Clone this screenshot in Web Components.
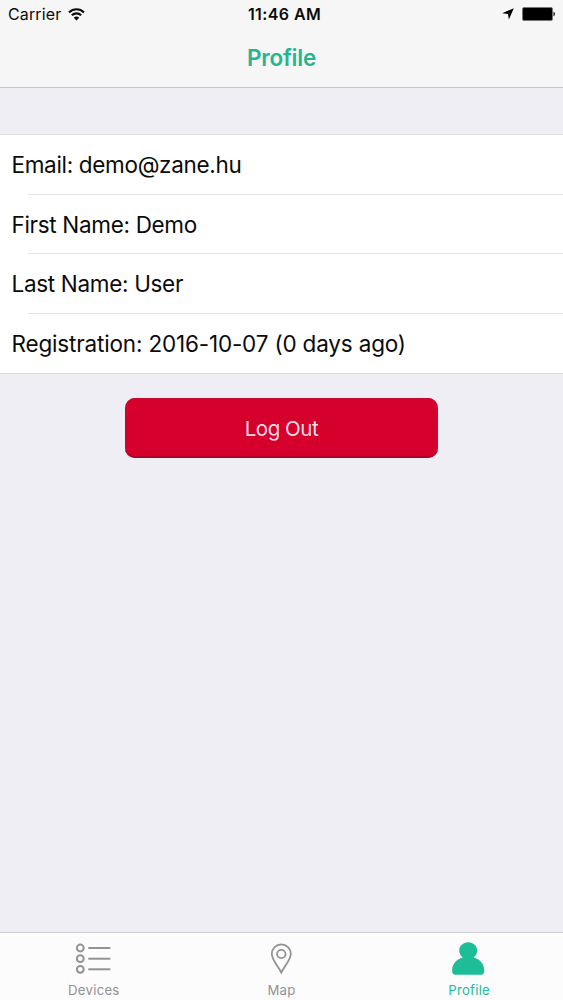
<!DOCTYPE html>
<html lang="en">
<head>
<meta charset="utf-8">
<title>Profile</title>
<style>
  html, body {
    margin: 0;
    height: 100%;
  }
  body {
    font-family: Inter, Roboto, sans-serif;
    color: #0b0b0b;
    overflow: hidden;
  }
</style>
</head>
<body>
<profile-screen></profile-screen>

<script>
// Status bar: carrier, clock, battery
class StatusBar extends HTMLElement {
  constructor() {
    super();
    this.attachShadow({ mode: 'open' });
  }

  connectedCallback() {
    this.shadowRoot.innerHTML = `
      <style>
        :host {
          display: grid;
          grid-template-columns: 1fr auto 1fr;
          align-items: center;
          height: 28px;
          padding: 0 8px 0 8px;
          font-size: 16px;
          line-height: 20px;
        }
        .left, .right {
          display: flex;
          align-items: center;
        }
        .left { gap: 7px; letter-spacing: 0.12px; }
        .right { justify-content: flex-end; gap: 8px; }
        .clock { font-weight: 600; letter-spacing: 0.4px; padding-left: 6px; }
        svg { display: block; }
      </style>
      <div class="left">
        <span>${this.getAttribute('carrier')}</span>
        <svg width="17" height="13" viewBox="0 0 17 13" fill="none" stroke="#0b0b0b" stroke-width="2.1">
          <path d="M1 4.4C5.2.2 11.8.2 16 4.4"/>
          <path d="M3.8 7.3c2.7-2.6 6.7-2.6 9.4 0"/>
          <path d="M5.8 9.7c1.5-1.5 3.9-1.5 5.4 0L8.5 12.4z" fill="#0b0b0b" stroke="none"/>
        </svg>
      </div>
      <div class="clock">${this.getAttribute('time')}</div>
      <div class="right">
        <svg width="12" height="12" viewBox="0 0 12 12"><path d="M11.8.2 6.9 11.6 6 6 .2 5.2z" fill="#000"/></svg>
        <svg width="33" height="14" viewBox="0 0 33 14">
          <rect x=".5" y=".5" width="30" height="13" rx="1.5" fill="#000" stroke="#777"/>
          <path d="M31.5 4.8c1.8.5 1.8 3.9 0 4.4z" fill="#000"/>
        </svg>
      </div>
    `;
  }
}

// Bar with the screen title; the status bar goes in the slot
class NavHeader extends HTMLElement {
  constructor() {
    super();
    this.attachShadow({ mode: 'open' });
  }

  connectedCallback() {
    this.shadowRoot.innerHTML = `
      <style>
        :host {
          display: block;
          box-sizing: border-box;
          height: 88px;
          background: #f6f6f7;
          border-bottom: 1px solid #c8c8ca;
        }
        h1 {
          margin: 0;
          height: 59px;
          line-height: 60px;
          text-align: center;
          font-size: 22.5px;
          font-weight: 600;
          letter-spacing: -0.2px;
          color: #27b58f;
        }
      </style>
      <slot></slot>
      <h1>${this.getAttribute('heading')}</h1>
    `;
  }
}

class InfoList extends HTMLElement {
  constructor() {
    super();
    this.attachShadow({ mode: 'open' });
  }

  connectedCallback() {
    this.shadowRoot.innerHTML = `
      <style>
        :host {
          display: block;
          background: #fff;
          border-top: 1px solid #dfdfe3;
          border-bottom: 1px solid #d9d9dc;
        }
      </style>
      <slot></slot>
    `;
  }
}

class InfoRow extends HTMLElement {
  constructor() {
    super();
    this.attachShadow({ mode: 'open' });
  }

  connectedCallback() {
    this.shadowRoot.innerHTML = `
      <style>
        :host {
          display: block;
          height: 59.7px;
          font-size: 22.5px;
          line-height: 60.5px;
          letter-spacing: -0.32px;
          white-space: nowrap;
        }
        /* digits need a little more room */
        :host([numeric]) { letter-spacing: -0.17px; }
        :host(:last-child) { height: 58.9px; }
        .text {
          height: 58.7px;
          padding-left: 11.5px;
        }
        .line {
          height: 1px;
          margin-left: 28px;
          background: #e6e6e8;
        }
        :host(:last-child) .line { display: none; }
      </style>
      <div class="text"><slot></slot></div>
      <div class="line"></div>
    `;
  }
}

class ActionButton extends HTMLElement {
  constructor() {
    super();
    this.attachShadow({ mode: 'open' });
  }

  connectedCallback() {
    this.shadowRoot.innerHTML = `
      <style>
        :host {
          display: block;
          width: 313px;
          height: 60px;
          margin: 24px auto 0;
        }
        button {
          display: block;
          width: 100%;
          height: 100%;
          padding: 1px 0 0;
          border: 0;
          border-radius: 10px;
          background: #d5002b;
          box-shadow: inset 0 -3px 1px -1px #ad0028, inset 0 1px 0 #c90830;
          color: #fbdde3;
          font: 400 20.5px/59px Inter, Roboto, sans-serif;
          letter-spacing: -0.45px;
        }
      </style>
      <button type="button"><slot></slot></button>
    `;
  }
}

class TabItem extends HTMLElement {
  constructor() {
    super();
    this.attachShadow({ mode: 'open' });
  }

  connectedCallback() {
    this.shadowRoot.innerHTML = `
      <style>
        :host {
          display: flex;
          flex-direction: column;
          align-items: center;
          color: #929292;
          font-size: 13.2px;
          line-height: 17px;
          letter-spacing: 0.25px;
        }
        :host([active]) { color: #1dbd97; }
        .icon {
          height: 49px;
          display: flex;
        }
        svg { display: block; }
      </style>
      <div class="icon">${this.getIcon()}</div>
      <span>${this.getAttribute('label')}</span>
    `;
  }

  getIcon() {
    const icons = {
      list: `
        <svg width="36" height="49" viewBox="0.2 0 36 49" fill="none" stroke="currentColor" stroke-width="2">
          <circle cx="4.5" cy="15" r="3.4"/><path d="M12.5 15h22"/>
          <circle cx="4.5" cy="25.7" r="3.4"/><path d="M12.5 25.7h22"/>
          <circle cx="4.5" cy="36.3" r="3.4"/><path d="M12.5 36.3h22"/>
        </svg>`,
      pin: `
        <svg width="22" height="49" viewBox="-0.3 0 22 49" fill="none" stroke="currentColor" stroke-width="1.8">
          <path d="M11 39.5C8 33.5 1.5 27 1.5 20.8a9.5 9.5 0 0 1 19 0C20.5 27 14 33.5 11 39.5z"/>
          <circle cx="11" cy="21" r="4.2"/>
        </svg>`,
      person: `
        <svg width="34" height="49" viewBox="0.8 0 34 49" fill="currentColor">
          <path d="M17 9.2c5 0 9 3.6 9 8.3 0 3-1.4 5.2-3.5 6.9C28.5 26 33 30.6 33 37v1.5c0 2-1 3.2-3 3.2H4c-2 0-3-1.2-3-3.2V37c0-6.4 4.5-11 10.500-12.600C9.400 22.700 8 20.500 8 17.500c0-4.700 4-8.300 9-8.300z"/>
        </svg>`
    };
    return icons[this.getAttribute('icon')] || '';
  }
}

class TabBar extends HTMLElement {
  constructor() {
    super();
    this.attachShadow({ mode: 'open' });
  }

  connectedCallback() {
    this.shadowRoot.innerHTML = `
      <style>
        :host {
          display: grid;
          grid-template-columns: repeat(3, 1fr);
          box-sizing: border-box;
          height: 68px;
          background: #fdfcfd;
          border-top: 1px solid #d0d0d3;
        }
      </style>
      <slot></slot>
    `;
  }
}

class ProfileScreen extends HTMLElement {
  constructor() {
    super();
    this.attachShadow({ mode: 'open' });
  }

  connectedCallback() {
    this.shadowRoot.innerHTML = `
      <style>
        :host {
          display: flex;
          flex-direction: column;
          height: 100vh;
          background: #efeef4;
        }
        main {
          flex: 1;
          padding-top: 46px;
        }
      </style>
      <nav-header heading="Profile">
        <status-bar carrier="Carrier" time="11:46 AM"></status-bar>
      </nav-header>
      <main>
        <info-list>
          <info-row>Email: demo@zane.hu</info-row>
          <info-row>First Name: Demo</info-row>
          <info-row>Last Name: User</info-row>
          <info-row numeric>Registration: 2016-10-07 (0 days ago)</info-row>
        </info-list>
        <action-button>Log Out</action-button>
      </main>
      <tab-bar>
        <tab-item icon="list" label="Devices"></tab-item>
        <tab-item icon="pin" label="Map"></tab-item>
        <tab-item icon="person" label="Profile" active></tab-item>
      </tab-bar>
    `;
  }
}

customElements.define('status-bar', StatusBar);
customElements.define('nav-header', NavHeader);
customElements.define('info-list', InfoList);
customElements.define('info-row', InfoRow);
customElements.define('action-button', ActionButton);
customElements.define('tab-item', TabItem);
customElements.define('tab-bar', TabBar);
customElements.define('profile-screen', ProfileScreen);
</script>
</body>
</html>
